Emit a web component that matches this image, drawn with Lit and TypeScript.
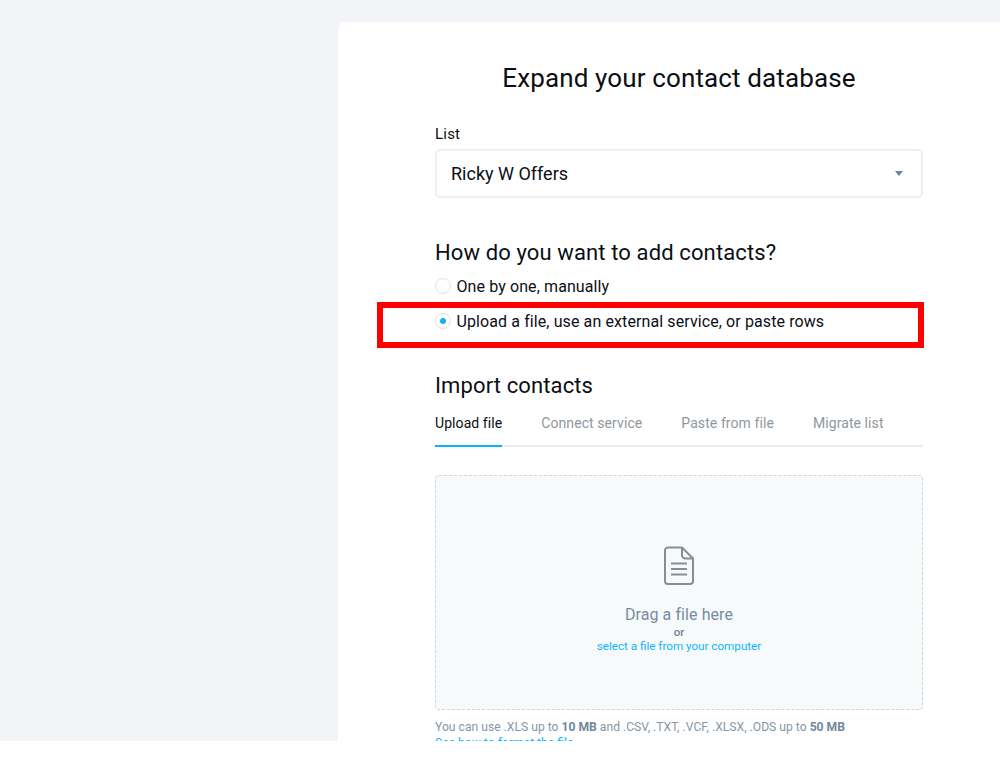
import { LitElement, html, css } from "lit";
import { customElement } from "lit/decorators.js";

@customElement("app-root")
export class AppRoot extends LitElement {
  static styles = css`
    :host { display: block; height: 759px; background: #fff; font-family: Roboto, "Liberation Sans", sans-serif; color: #0b0f14; overflow: hidden; }
    .stage { height: 741px; background: #f2f4f8; overflow: hidden; padding: 22px 0 0 338px; box-sizing: border-box; position: relative; }
    .card { background: #fff; border-radius: 8px 0 0 0; height: 800px; padding: 39px 77px 0 97px; box-sizing: border-box; }
    h1 { margin: 0; font-size: 26px; line-height: 34px; font-weight: 400; text-align: center; letter-spacing: 0.13px; }
    .label { margin-top: 29px; font-size: 15px; line-height: 20px; letter-spacing: 0.2px; }
    .select { margin-top: 5px; height: 49px; box-sizing: border-box; border: 2px solid #eeeff2; border-radius: 5px; padding: 0 14px; display: flex; align-items: center; justify-content: space-between; font-size: 18px; }
    .caret { width: 0; height: 0; border-left: 4.5px solid transparent; border-right: 4.5px solid transparent; border-top: 5px solid #6f8499; margin-right: 4px; }
    h2 { margin: 0; font-size: 22px; line-height: 28px; font-weight: 400; letter-spacing: 0.12px; }
    .how { margin-top: 41px; }
    .radios { margin-top: 9px; display: flex; flex-direction: column; gap: 15px; }
    .radio { display: flex; align-items: center; gap: 5.5px; height: 20px; font-size: 16px; letter-spacing: 0.1px; }
    .dot { width: 16px; height: 16px; box-sizing: border-box; border: 1px solid #e0e2e6; border-radius: 50%; display: flex; align-items: center; justify-content: center; background: #fff; flex: none; }
    .dot.on::after { content: ""; width: 6px; height: 6px; border-radius: 50%; background: #0db2fb; }
    .import { margin-top: 41px; }
    .tabs { margin-top: 9px; display: flex; gap: 39px; border-bottom: 2px solid #e9ebee; height: 36px; }
    .tab { font-size: 14px; line-height: 20px; padding-top: 4px; color: #8f979e; letter-spacing: 0.08px; height: 32px; }
    .tab.active { color: #0b0f14; letter-spacing: 0.08px; border-bottom: 2px solid #0db2fb; }
    .drop { margin-top: 28px; height: 235px; box-sizing: border-box; border: 1px dashed #cfd5da; border-radius: 4px; background: #f6fafb; display: flex; flex-direction: column; align-items: center; padding-top: 70px; }
    .drop svg { display: block; }
    .drag { margin-top: 19px; font-size: 16px; line-height: 20px; color: #788ca0; letter-spacing: 0.08px; }
    .or { font-size: 11.5px; line-height: 14px; color: #6f7f8f; font-weight: 500; }
    .pick { font-size: 11.66px; line-height: 15px; color: #10b4fb; }
    .note { margin-top: 9px; font-size: 12.15px; line-height: 16px; color: #8596a6; white-space: nowrap; }
    .note b { font-weight: 700; color: #73879a; }
    .note .see { color: #10b4fb; display: block; }
    .mark { position: absolute; left: 377px; top: 302px; width: 547px; height: 46px; box-sizing: border-box; border: 6px solid #ff0000; pointer-events: none; }
  `;

  render() {
    return html`
      <div class="stage">
        <div class="card">
          <h1>Expand your contact database</h1>
          <div class="label">List</div>
          <div class="select"><span>Ricky W Offers</span><span class="caret"></span></div>
          <h2 class="how">How do you want to add contacts?</h2>
          <div class="radios">
            <div class="radio"><span class="dot"></span>One by one, manually</div>
            <div class="radio"><span class="dot on"></span>Upload a file, use an external service, or paste rows</div>
          </div>
          <h2 class="import">Import contacts</h2>
          <div class="tabs">
            <div class="tab active">Upload file</div>
            <div class="tab">Connect service</div>
            <div class="tab">Paste from file</div>
            <div class="tab">Migrate list</div>
          </div>
          <div class="drop">
            <svg width="30" height="40" viewBox="0 0 30 40" fill="none" stroke="#858d96" stroke-width="2">
              <path d="M4 1.5H18L29 12.5V35a3 3 0 0 1-3 3H4a3 3 0 0 1-3-3V4.5a3 3 0 0 1 3-3Z" stroke-linejoin="round"/>
              <path d="M18 1.5V9a3.5 3.5 0 0 0 3.5 3.5H29"/>
              <path d="M7 17.5H23M7 23H23M7 28.5H23"/>
            </svg>
            <div class="drag">Drag a file here</div>
            <div class="or">or</div>
            <div class="pick">select a file from your computer</div>
          </div>
          <div class="note">You can use .XLS up to <b>10 MB</b> and .CSV, .TXT, .VCF, .XLSX, .ODS up to <b>50 MB</b><span class="see">See how to format the file</span></div>
        </div>
        <div class="mark"></div>
      </div>
    `;
  }
}
